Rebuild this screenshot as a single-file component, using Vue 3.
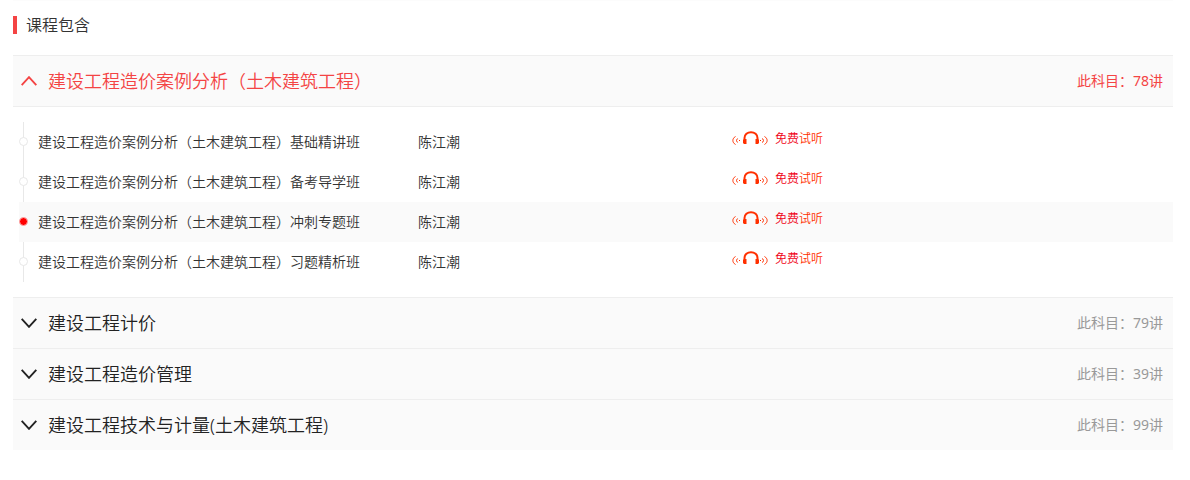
<template>
    <section class="course">
        <h2 class="course-title">课程包含</h2>
        <div v-for="(subject, index) in subjects" :key="subject.name" class="subject" :class="{ open: index === openIndex }">
            <button type="button" class="subject-head" :aria-expanded="index === openIndex" @click="toggle(index)">
                <svg class="arrow" viewBox="0 0 16 10" aria-hidden="true">
                    <path d="M0.7 0.8 L8 8.8 L15.3 0.8" />
                </svg>
                <span class="subject-name">{{ subject.name }}</span>
                <span class="subject-count">此科目：{{ subject.count }}讲</span>
            </button>
            <ul v-if="index === openIndex && subject.classes.length" class="class-list">
                <li
                    v-for="(item, i) in subject.classes"
                    :key="item"
                    class="class-row"
                    :class="{ active: i === activeClass }"
                    @mouseenter="activeClass = i"
                >
                    <span class="dot"></span>
                    <span class="class-name">{{ subject.name }}{{ item }}</span>
                    <span class="teacher">陈江潮</span>
                    <a href="#" class="listen" @click.prevent>
                        <svg class="headphone" viewBox="0 0 36 14" aria-hidden="true">
                            <path class="band" d="M12.5 10 V7 A6.2 5.6 0 0 1 25.5 7 V10" />
                            <path class="cup" d="M11 9 l1 -1 h2.5 v5 h-2.5 l-1 -1 z M27 9 l-1 -1 h-2.5 v5 h2.5 l1 -1 z" />
                            <path class="wave" d="M3.5 5.5 C0 7.5 0 11.5 3.5 13.5 M6 7.5 C4 8.5 4 10.5 6 11.5 M32.5 5.5 C36 7.5 36 11.5 32.5 13.5 M30 7.5 C32 8.5 32 10.5 30 11.5" />
                            <path class="cup" d="M7 9 h1 v1 h-1 z M28 9 h1 v1 h-1 z" />
                        </svg>
                        <span><span class="free">免费</span>试听</span>
                    </a>
                </li>
            </ul>
        </div>
    </section>
</template>

<script setup>
import { ref } from 'vue'

// Data
const subjects = [
    {
        name: '建设工程造价案例分析（土木建筑工程）',
        count: 78,
        classes: ['基础精讲班', '备考导学班', '冲刺专题班', '习题精析班']
    },
    { name: '建设工程计价', count: 79, classes: [] },
    { name: '建设工程造价管理', count: 39, classes: [] },
    { name: '建设工程技术与计量(土木建筑工程)', count: 99, classes: [] }
]

const openIndex = ref(0)
const activeClass = ref(2)

// Methods
const toggle = (index) => {
    openIndex.value = openIndex.value === index ? -1 : index
}
</script>

<style>
body {
    margin: 0;
    background: #fff;
}
</style>

<style scoped>
.course {
    margin: 0 17px 0 13px;
    padding-top: 15px;
    border-top: 1px solid #fcfcfc;
    font-family: "Noto Sans", "Noto Sans CJK SC", sans-serif;
    font-size: 14px;
    font-weight: 350;
    color: #333;
}

.course-title {
    margin: 0 0 21px;
    padding-left: 9px;
    border-left: 4px solid #f44444;
    font-size: 16px;
    line-height: 18px;
    font-weight: 350;
}

.subject-head {
    display: flex;
    align-items: center;
    width: 100%;
    height: 51px;
    padding: 0 10px 0 8px;
    border: 0;
    border-top: 1px solid #eee;
    background: #fafafa;
    color: #222;
    font-family: inherit;
    font-weight: inherit;
    text-align: left;
    cursor: pointer;
}

.open .subject-head {
    height: 52px;
    border-bottom: 1px solid #eee;
    color: #f44444;
}

.arrow {
    width: 16px;
    height: 10px;
    margin-right: 11px;
    fill: none;
    stroke: currentColor;
    stroke-width: 1.9;
}

.open .arrow {
    transform: rotate(180deg);
}

.subject-name {
    flex: 1;
    font-size: 18px;
    line-height: 24px;
}

.subject-count {
    font-size: 14px;
    line-height: 20px;
    font-weight: 400;
    color: #999;
}

.open .subject-count {
    color: #f44444;
}

.class-list {
    margin: 0 0 0 6px;
    padding: 15px 0;
    list-style: none;
}

.class-row {
    box-sizing: border-box;
    display: grid;
    grid-template-columns: 9px 380px 314px 1fr;
    align-items: center;
    height: 40px;
    padding-bottom: 2px;
    background: linear-gradient(#e8e8e8, #e8e8e8) 4px 0 / 1px 100% no-repeat;
}

.class-row.active {
    background: #fafafa;
}

.dot {
    box-sizing: border-box;
    width: 9px;
    height: 9px;
    border: 1px solid #e8e8e8;
    border-radius: 50%;
    background: #fff;
}

.active .dot {
    border-color: #fcb0b0;
    background: #f00;
}

.class-name {
    padding-left: 10px;
}

.teacher {
    padding-left: 10px;
}

.listen {
    display: flex;
    align-items: center;
    gap: 7px;
    padding: 0 0 6px 10px;
    color: #ff3000;
    font-family: "Noto Sans CJK SC", sans-serif;
    font-size: 12px;
    line-height: 16px;
    text-decoration: none;
}

.free {
    color: #f00014;
}

.headphone {
    width: 36px;
    height: 14px;
    fill: none;
    stroke: #ff3000;
}

.band {
    stroke-width: 2;
}

.cup {
    fill: #ff3000;
    stroke: none;
}

.wave {
    stroke-width: 1;
}
</style>
